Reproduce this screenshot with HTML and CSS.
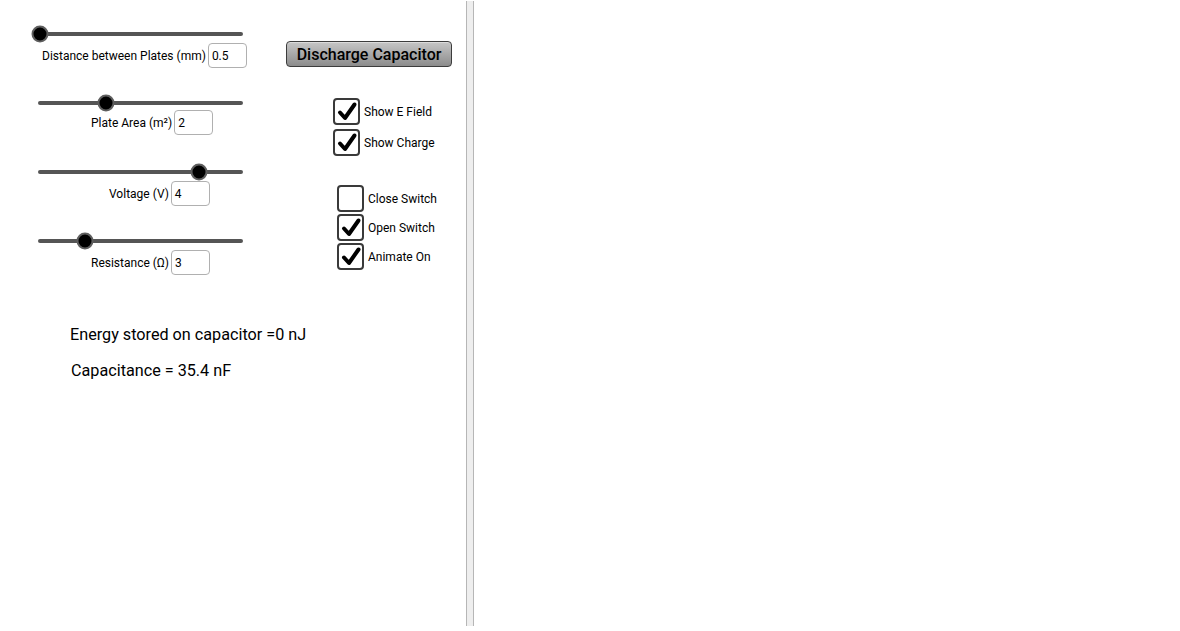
FILE: index.html
```html
<!DOCTYPE html>
<html>
<head>
<meta charset="utf-8">
<link rel="stylesheet" href="styles.css">
</head>
<body>
<div class="app">
  <div class="panel">
    <div class="top">
      <div class="sliders">
        <div class="slider">
          <div class="track-row"><div class="track"><span class="knob" style="left:2px"></span></div></div>
          <div class="label-row lbl-dist"><span>Distance between Plates (mm)</span><span class="field">0.5</span></div>
        </div>
        <div class="slider">
          <div class="track-row"><div class="track"><span class="knob" style="left:68px"></span></div></div>
          <div class="label-row lbl-area"><span>Plate Area (m²)</span><span class="field">2</span></div>
        </div>
        <div class="slider">
          <div class="track-row"><div class="track"><span class="knob" style="left:161px"></span></div></div>
          <div class="label-row lbl-volt"><span>Voltage (V)</span><span class="field">4</span></div>
        </div>
        <div class="slider">
          <div class="track-row"><div class="track"><span class="knob" style="left:47px"></span></div></div>
          <div class="label-row lbl-res"><span>Resistance (Ω)</span><span class="field">3</span></div>
        </div>
      </div>
      <div class="controls">
        <button class="btn">Discharge Capacitor</button>
        <div class="group group-view">
          <label class="check"><span class="box on"><svg viewBox="0 0 22 23"><path d="M4 12.5 L9 18 L18.5 4.5"/></svg></span><span>Show E Field</span></label>
          <label class="check"><span class="box on"><svg viewBox="0 0 22 23"><path d="M4 12.5 L9 18 L18.5 4.5"/></svg></span><span>Show Charge</span></label>
        </div>
        <div class="group group-switch">
          <label class="check"><span class="box"></span><span>Close Switch</span></label>
          <label class="check"><span class="box on"><svg viewBox="0 0 22 23"><path d="M4 12.5 L9 18 L18.5 4.5"/></svg></span><span>Open Switch</span></label>
          <label class="check"><span class="box on"><svg viewBox="0 0 22 23"><path d="M4 12.5 L9 18 L18.5 4.5"/></svg></span><span>Animate On</span></label>
        </div>
      </div>
    </div>
    <div class="readouts">
      <div class="readout r-energy">Energy stored on capacitor =0 nJ</div>
      <div class="readout r-cap">Capacitance = 35.4 nF</div>
    </div>
  </div>
  <div class="divider"></div>
  <div class="graphics"></div>
</div>
</body>
</html>
```

FILE: styles.css
```css
html, body {
  margin: 0;
  padding: 0;
  background: #fff;
}
body {
  font-family: Roboto, "Liberation Sans", sans-serif;
  color: #000;
  width: 1180px;
  height: 631px;
  overflow: hidden;
}
.app {
  display: flex;
  height: 631px;
}
.panel {
  width: 466px;
  flex: none;
}
.top {
  display: flex;
  align-items: flex-start;
}
.sliders {
  width: 286px;
  padding-top: 24px;
  display: flex;
  flex-direction: column;
  gap: 25px;
}
.slider {
  display: flex;
  flex-direction: column;
}
.track-row {
  height: 19px;
  display: flex;
  align-items: center;
}
.track {
  position: relative;
  margin-left: 38px;
  width: 205px;
  height: 4px;
  border-radius: 2px;
  background: #555;
}
.knob {
  position: absolute;
  top: 50%;
  width: 17px;
  height: 17px;
  box-sizing: border-box;
  border-radius: 50%;
  background: #000;
  border: 2px solid #5e5e5e;
  transform: translate(-50%, -50%);
}
.label-row {
  height: 25px;
  display: flex;
  align-items: center;
  font-size: 12px;
}
.lbl-dist { margin-left: 42px; }
.lbl-area { margin-left: 91px; margin-top: -2px; margin-bottom: 2px; }
.lbl-volt { margin-left: 109px; }
.lbl-res { margin-left: 91px; }
.field {
  width: 39px;
  height: 25px;
  box-sizing: border-box;
  margin-left: 2px;
  border: 1px solid #b0b0b0;
  border-radius: 4px;
  padding-left: 3px;
  display: flex;
  align-items: center;
  font-size: 12px;
}
.controls {
  padding-top: 41px;
  display: flex;
  flex-direction: column;
  align-items: flex-start;
}
.btn {
  width: 166px;
  height: 26px;
  box-sizing: border-box;
  border: 1px solid #3c3c3c;
  border-radius: 4px;
  background: linear-gradient(#c6c6c6, #8c8c8c);
  font-family: Roboto, "Liberation Sans", sans-serif;
  font-size: 16px;
  font-weight: 500;
  color: #000;
  padding: 0;
  box-shadow: inset 0 1px 0 rgba(255,255,255,0.4);
}
.group {
  display: flex;
  flex-direction: column;
}
.group-view {
  margin-left: 47px;
  margin-top: 31px;
  gap: 4px;
}
.group-switch {
  margin-left: 51px;
  margin-top: 29px;
  gap: 2px;
}
.check {
  display: flex;
  align-items: center;
  gap: 4px;
  font-size: 12px;
}
.box {
  width: 27px;
  height: 27px;
  box-sizing: border-box;
  border: 2px solid #3a3a3a;
  border-radius: 4px;
  background: #fff;
  display: flex;
  align-items: center;
  justify-content: center;
}
.box svg {
  width: 22px;
  height: 23px;
}
.box path {
  fill: none;
  stroke: #000;
  stroke-width: 4;
  stroke-linecap: round;
  stroke-linejoin: round;
}
.readouts {
  margin-top: 50px;
  display: flex;
  flex-direction: column;
  gap: 16px;
}
.readout {
  font-size: 16.2px;
  line-height: 20px;
}
.r-energy { margin-left: 70px; }
.r-cap { margin-left: 71px; }
.divider {
  flex: none;
  width: 8px;
  height: 625px;
  margin-top: 1px;
  box-sizing: border-box;
  background: #eeeeee;
  border-left: 1px solid #b6b6b6;
  border-right: 1px solid #b6b6b6;
}
.graphics {
  flex: 1;
}
```
